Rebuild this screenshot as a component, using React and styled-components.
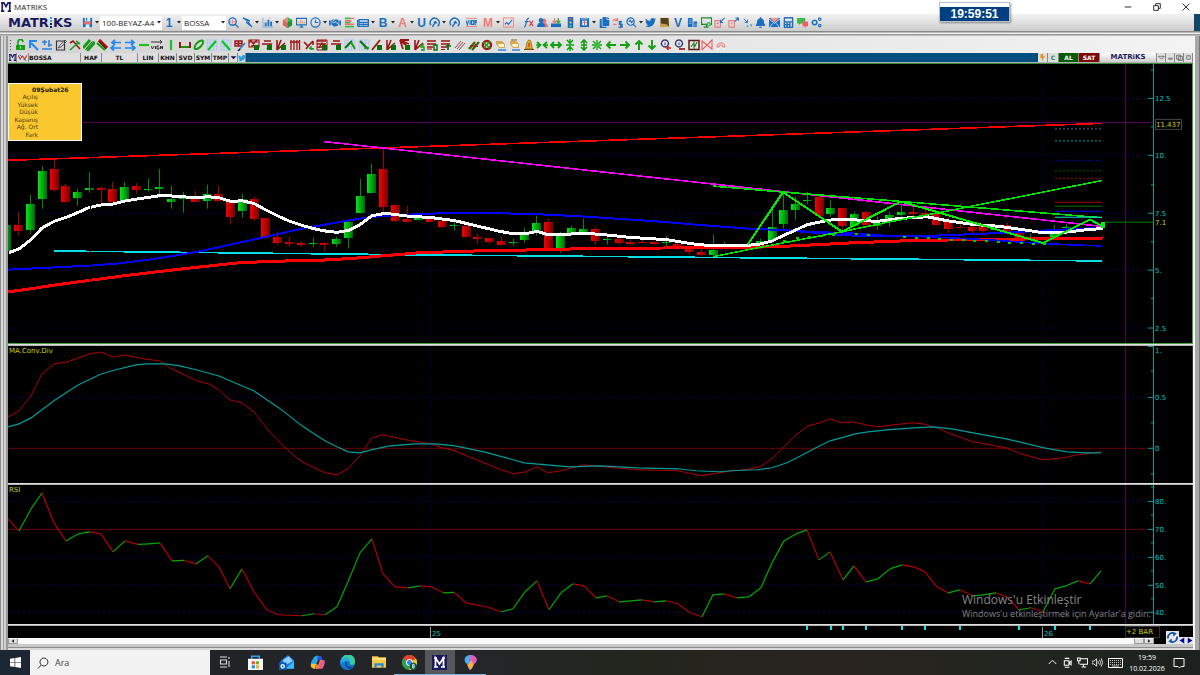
import React from "react"

import styled, { createGlobalStyle, css } from "styled-components"
import {
	FaHandshake, FaNewspaper, FaUserFriends, FaTwitter, FaBell, FaCalculator, FaCopy, FaBolt
} from "react-icons/fa"

const blue = "#1b6fc0"
const green = "#10a010"
const lime = "#00c818"
const maroon = "#9c1414"
const pink = "#f07a7a"
const navy = "#1a1a5e"
const verdana = `"DejaVu Sans", Verdana, sans-serif`
const segoe = `"Open Sans", "Segoe UI", sans-serif`

const GlobalStyle = createGlobalStyle`
	* {
		box-sizing: border-box;
	}
	body {
		margin: 0;
		background: #a8a8a8;
		font-family: ${segoe};
	}
	button, select, input {
		margin: 0;
		padding: 0;
		border: 0;
		border-radius: 0;
		background: none;
		font-family: inherit;
		color: inherit;
	}
	svg {
		display: block;
		flex: none;
	}
`

const StyledApp = styled.div`
	display: flex;
	flex-direction: column;
	height: 100vh;
	min-height: 500px;
	overflow: hidden;
`

/* ---------- title bar ---------- */

const TitleBar = styled.header`
	flex: none;
	display: flex;
	align-items: center;
	height: 14px;
	padding-left: 1px;
	background: white;
	font-size: 8px;
	line-height: 12px;
	color: #222;
	.title {
		flex: 1;
		margin-left: 3px;
	}
`

const WindowButton = styled.button`
	display: flex;
	justify-content: center;
	width: 29px;
	height: 12px;
	align-items: center;
	color: #222;
`

const Clock = styled.div`
	position: absolute;
	top: 2px;
	right: 190px;
	width: 71px;
	height: 20px;
	padding-top: 5px;
	border: 1px solid #b8c0c8;
	background: linear-gradient(white 0 4px, #003f80 4px);
	box-shadow: 1px 1px 2px rgba(0, 0, 0, .4);
	color: white;
	font: bold 12px/13px "Liberation Sans", Arial, sans-serif;
	text-align: center;
`

/* ---------- toolbars ---------- */

const MainToolbar = styled.div`
	flex: none;
	display: flex;
	align-items: center;
	height: 17px;
	padding-left: 8px;
	background: linear-gradient(#f2f2f2, #cccccc);
	.corner {
		width: 6px;
		height: 17px;
		margin-left: auto;
		background: #124468;
	}
`

const Logo = styled.div`
	display: flex;
	align-items: center;
	width: 72px;
	font: bold 13px/16px ${verdana};
	color: ${navy};
`

const ToolButton = styled.button`
	display: flex;
	align-items: center;
	justify-content: center;
	flex: none;
	width: ${props => props.$width || 14}px;
	height: 16px;
	color: ${props => props.$color || blue};
	font: bold 12px/16px "Liberation Sans", Arial, sans-serif;
	overflow: hidden;
`

const StyledCaret = styled.span`
	flex: none;
	width: 6px;
	display: flex;
	justify-content: center;
`

const ComboWrapper = styled.label`
	display: flex;
	align-items: center;
	flex: none;
	width: ${props => props.$width}px;
	height: 14px;
	background: white;
	select {
		flex: 1;
		min-width: 0;
		padding-left: 2px;
		appearance: none;
		font-size: 8px;
		line-height: 14px;
		color: #222;
	}
`

const Groove = styled.div`
	flex: none;
	height: 5px;
	background: linear-gradient(#888 0 1px, #bbb 1px 2px, #f0f0f0 2px 3px, #999 3px 4px, #bcbcbc 4px);
`

const Frame = styled.main`
	flex: 1;
	min-height: 0;
	display: flex;
	flex-direction: column;
	padding: 0 7px 0 8px;
	background: linear-gradient(90deg,
		#8c8c8c 0 1px, #d8d8d8 1px 3px, #a4a4a4 3px 4px, #cfcfcf 4px 6px, #9a9a9a 6px 8px,
		#b0b0b0 8px calc(100% - 7px), #f4f4f4 calc(100% - 7px) calc(100% - 5px),
		#a8a8a8 calc(100% - 5px) calc(100% - 1px), #777 calc(100% - 1px));
`

const DrawToolbar = styled.div`
	flex: none;
	display: flex;
	align-items: center;
	height: 17px;
	background: linear-gradient(90deg, #d4d4d4, #f3f3f3);
`

const DrawTools = styled.div`
	display: grid;
	grid-template-columns: repeat(52, 1fr);
	width: 715px;
	margin-left: 1px;
`

const DrawButton = styled.button`
	display: flex;
	justify-content: center;
	align-items: center;
	height: 16px;
`

const ChartHeader = styled.div`
	flex: none;
	display: flex;
	height: 9px;
	background: #00507f;
	.spacer {
		flex: 1;
	}
`

const HeaderButton = styled.button`
	display: flex;
	align-items: center;
	justify-content: ${props => (props.$left ? "flex-start" : "center")};
	width: ${props => props.$width}px;
	height: 9px;
	border-right: 1px solid #888;
	background: ${props => props.$bg || "#dedede"};
	color: ${props => props.$color || "#111"};
	font: bold 6px/9px ${verdana};
	white-space: nowrap;
	overflow: hidden;
`

const BrandButton = styled(HeaderButton)`
	font-size: 7px;
	color: ${navy};
	background: linear-gradient(white, #ccc);
`

/* ---------- chart panels ---------- */

const Charts = styled.section`
	position: relative;
	flex: 1;
	min-height: 0;
	display: flex;
	flex-direction: column;
	margin-top: 1px;
	border-top: 1px solid #3c8a3c;
	background: black;
`

const panelText = css`
	font: 7px ${verdana};
	fill: #00c4c4;
	text {
		white-space: pre;
	}
`

const Panel = styled.div`
	position: relative;
	flex: ${props => props.$size} 1 0;
	min-height: 0;
	display: flex;
	border-right: 1px solid ${props => (props.$active ? "#3ca03c" : "#333")};
	border-bottom: ${props => (props.$active ? "1px solid #3ca03c" : 0)};
	.plot {
		flex: 1;
		min-width: 0;
		height: 100%;
	}
	.scale {
		width: 45px;
		height: 100%;
		${panelText};
	}
`

const Divider = styled.div`
	flex: none;
	height: 2px;
	background: linear-gradient(#f4f4f4, #a0a0a0);
`

const PanelName = styled.div`
	position: absolute;
	top: 0;
	left: 1px;
	font: 7px/10px ${verdana};
	color: #d0d000;
`

const QuoteBox = styled.div`
	position: absolute;
	top: 19px;
	left: 0;
	width: 74px;
	height: 58px;
	padding: 2px;
	border: 1px solid white;
	background: #fbc72f;
	color: #4c3d10;
	display: grid;
	grid-template-rows: repeat(7, 1fr);
	font: 6px/7px ${verdana};
	strong {
		padding-left: 21px;
		color: #221a00;
	}
	span {
		width: 27px;
		text-align: right;
		justify-self: start;
	}
`

const Watermark = styled.div`
	position: absolute;
	right: 44px;
	bottom: 24px;
	width: 187px;
	color: #858585;
	font-size: 9px;
	line-height: 12px;
	white-space: nowrap;
	strong {
		display: block;
		font-weight: normal;
		font-size: 12px;
		line-height: 16px;
	}
`

const TimeAxis = styled.div`
	flex: none;
	display: flex;
	height: 12px;
	svg {
		flex: 1;
		min-width: 0;
		height: 12px;
		${panelText};
	}
`

const BarCount = styled.div`
	flex: none;
	width: 35px;
	margin-right: 33px;
	border: 1px solid #333;
	color: #d0d000;
	font: 7px/10px ${verdana};
	white-space: nowrap;
`

const ScrollRow = styled.div`
	flex: none;
	display: flex;
	height: 6px;
	.track {
		flex: 1;
		background: #fafafa;
	}
	.rest {
		width: 39px;
	}
`

const ScrollButton = styled.button`
	display: flex;
	align-items: center;
	justify-content: center;
	width: 10px;
	height: 6px;
	border: 1px solid #999;
	border-top-color: white;
	background: #ddd;
`

const NavButtons = styled.div`
	position: absolute;
	right: 0;
	bottom: 0;
	display: flex;
	align-items: flex-end;
	button {
		background: #e8e8e8;
	}
`

const FrameBottom = styled.div`
	flex: none;
	height: 6px;
	background: linear-gradient(#c8c8c8 0 3px, #8c8c8c 3px 4px, #d8d8d8 4px 6px);
`

/* ---------- taskbar ---------- */

const Taskbar = styled.footer`
	flex: none;
	display: flex;
	align-items: stretch;
	height: 25px;
	background: linear-gradient(90deg, #1c2734, #222326 18%, #25262a 38%, #23261e 52%, #2a2420 70%, #20261f 88%, #1c201e);
	color: white;
`

const StartButton = styled.button`
	display: flex;
	align-items: center;
	justify-content: center;
	width: 30px;
`

const SearchBox = styled.label`
	display: flex;
	align-items: center;
	width: 180px;
	padding-left: 7px;
	background: #f2f2f2;
	color: #333;
	input {
		flex: 1;
		min-width: 0;
		margin-left: 6px;
		font-size: 9px;
		outline: 0;
		&::placeholder {
			color: #444;
			opacity: 1;
		}
	}
`

const Apps = styled.div`
	display: grid;
	grid-template-columns: repeat(9, 1fr);
	width: 276px;
`

const AppButton = styled.button`
	display: flex;
	align-items: center;
	justify-content: center;
	background: ${props => (props.$active ? "#56575a" : "none")};
	border-bottom: 1px solid ${props => (props.$open ? "#76b9ed" : "transparent")};
`

const Tray = styled.div`
	display: flex;
	align-items: center;
	margin-left: auto;
	padding-right: 11px;
	time {
		width: 44px;
		font-size: 7px;
		line-height: 11px;
		text-align: center;
	}
`

const TrayButton = styled.button`
	display: flex;
	justify-content: center;
	width: ${props => props.$width || 15}px;
`

/* ---------- icons ---------- */

// every shape is [path, colour, stroke width], a width of 0 fills it
const Glyph = ({ shapes, size = 12 }) => (
	<svg width={size} height={size} viewBox="0 0 12 12">
		{shapes.map(([d, color, width = 1.2], i) =>
			<path key={i} d={d} fill={width ? "none" : color} stroke={width ? color : "none"} strokeWidth={width} />
		)}
	</svg>
)

const Caret = () => (
	<StyledCaret>
		<svg width="4" height="3" viewBox="0 0 4 3"><path d="M0 0h4l-2 2.5z" fill="#222" /></svg>
	</StyledCaret>
)

const LogoDots = () => (
	<svg width="4" height="11" viewBox="0 0 4 11">
		<path d="M1 0h2v2h-2zM1 3h2v2h-2z" fill="#28a0e0" />
		<path d="M1 6h2v2h-2zM1 9h2v2h-2z" fill={navy} />
	</svg>
)

const LetterM = ({ size = 11, color = navy }) => (
	<svg width={size} height={size} viewBox="0 0 12 12">
		<path d="M1.500 11V1h2L6 5.500 8.500 1h2v10M0 11h4M8 11h4M0 1h3M9 1h3" fill="none" stroke={color} strokeWidth="2" />
	</svg>
)

const swirl = [["M2 9A5 5 0 1 1 9.500 10", blue, 1.7], ["M4 11C4 8 7 8 7 5L5 6M7 5l1.500 2", blue, 1.5]]

const mainTools = [
	{ name: "Kaydet", shapes: [["M1 1h10v10H1z", blue, 0], ["M3 0h6v5H3z", "#e8eef6", 0], ["M5 1v3", blue, 1.4], ["M2 5h8v3H2z", "#f06868", 0], ["M4 8h4v4H4z", "#e8eef6", 0]], caret: true },
	{ combo: "100-BEYAZ-A4", label: "Sayfa", width: 62 },
	{ name: "Pencere", text: "1", caret: true },
	{ combo: "BOSSA", label: "Sembol", width: 44 },
	{ name: "Ara", shapes: [["M5 1a4 4 0 1 1 0 8a4 4 0 1 1 0-8M8 8l3.500 3.500", blue, 1.4], ["M3 6V4M5 7V3M7 6V4", pink, 1.1]] },
	{ name: "Hızlı", shapes: [["M1 1l5 3-1 2 6 5-4-5 1-2z", blue, 1.3]], caret: true },
	{ name: "Grafik", shapes: [["M1 1v10h11", "#79aede", 1], ["M3 10V6h2v4zM6 10V3h2v7zM9 10V5h2v5z", blue, 0], ["M3 4h1M8 1h1", pink, 1]], caret: true },
	{ name: "Pasta", shapes: [["M6 6V0L1 3z", "#ef8a7a", 0], ["M6 6L1 3v6l5 3z", "#ef5a5a", 0], ["M6 6V0l5 3v6l-5 3z", "#38b858", 0], ["M6 6l5-3v6l-5 3z", "#209030", 0]] },
	{ name: "Ekran", shapes: [["M.5 1.500h11v7h-11zM4 11h4M6 8v3", blue, 1.3], ["M3 7V5M5 7V3M7 7V4M9 7V5", "#e89050", 1]] },
	{ name: "Saat", shapes: [["M6 1a5 5 0 1 1 0 10a5 5 0 1 1 0-10M6 3v3h3", blue, 1.3]], caret: true },
	{ name: "Anlaşma", icon: <FaHandshake size={12} /> },
	{ name: "Derinlik", shapes: [["M1 1.500h6M1 6h6M1 10.500h10", "#40b850", 2], ["M6 1.500h5M1 4h7M1 8h10", "#ee7070", 1.6]] },
	{ name: "Haber", icon: <FaNewspaper size={12} />, caret: true },
	{ name: "B", text: "B", caret: true },
	{ name: "A", text: "A", color: pink, caret: true, width: 13 },
	{ name: "U", text: "U", width: 13 },
	{ name: "Yenile", shapes: swirl, caret: true, width: 13 },
	{ name: "Döngü", shapes: swirl },
	{ name: "VIOP", shapes: [["M0 1.500h12M0 10.500h12", pink, 1], ["M0 3.500l1.500 5 1.500-5M4.500 3.500v5M6 4h2.500v4H6zM10 9V4h2v2h-2", blue, 1.2]], width: 20 },
	{ name: "Matriks", text: "M", color: pink, caret: true },
	{ name: "Teknik", shapes: [["M.5 1h11v10H.5z", pink, .9], ["M2 8l2-2 2 2 4-5", blue, 1.2]] },
	{ gap: true },
	{ name: "Fonksiyon", shapes: [["M1 11c2 0 2-2 2.500-5S5 1 6.500 1.500M2 5h4", blue, 1.3], ["M7 4l4 6M11 4L7 10", "#e04040", 1.3]] },
	{ name: "Kişiler", icon: <FaUserFriends size={12} color={blue} />, shapes: [["M8 2a2.300 2.300 0 1 1-.1 0M6 11c0-6 6-6 6 0z", "#ee7070", 0], ["M4.500 1a2.600 2.600 0 1 1-.1 0M0 11c0-7 9-7 9 0z", blue, 0]] },
	{ name: "İndir", shapes: [["M0 7v4h11V7z", blue, 0], ["M4 1v5M2 4l2 3 2-3", pink, 1.4], ["M8 1v5M6 4l2 3 2-3", "#30a850", 1.4]] },
	{ name: "Sinyal", shapes: [["M3 0h6v12H3z", blue, 0], ["M5 1h2v2H5z", "#ff5050", 0], ["M5 5h2v2H5z", "#ffd040", 0], ["M5 9h2v2H5z", "#50e060", 0]] },
	{ name: "Yükle", shapes: [["M1 1h10v10H1z", blue, 0], ["M2 2h8", "#9cc8f0", 1], ["M3.500 4h5v5h-5z", "white", 0], ["M6 9V5M4 6.500l2-2 2 2", "#e04040", 1]], caret: true },
	{ name: "Kopyala", icon: <FaCopy size={11} /> },
	{ name: "Kur", shapes: [["M1 5a3 3 0 0 1 5-2M6 1v3H3M1 8h4", pink, 1.3], ["M11 5H8v3h3v3H7M9.500 4v8", blue, 1.3]], width: 13 },
	{ name: "İncele", shapes: [["M5 1a4 4 0 1 1 0 8a4 4 0 1 1 0-8M8 8l3 3M3 5l1.500-1.500L6 6l2-2", blue, 1.3]], caret: true },
	{ name: "Twitter", icon: <FaTwitter size={11} />, width: 13 },
	{ name: "Defter", shapes: [["M1 1h10v10H1z", "#c8a050", 0], ["M2 1h8l1 9-3-2-6-1z", "#54401c", 0]] },
	{ name: "V", text: "V" },
	{ name: "Şirket", shapes: [["M1 1h5v10H1zM7 5h4v6H7z", blue, 0], ["M2 3h3M2 5h3M2 7h3M8 7v3M10 7v4", "#a8cdf0", .7]] },
	{ name: "Ekran ayarı", shapes: [["M.5 1h11v7H.5zM3 11h5M6 8v3", "#208838", 1.3], ["M8.500 5.500a2.500 2.500 0 1 1-.1 0", "#3cb850", 0], ["M8.500 7v2", "white", 1]] },
	{ name: "Küçült", shapes: [["M1 4h6v7H1z", pink, 1.2], ["M3 6h2v2H3z", pink, 0], ["M11.500 1L7.500 5M7 3v3h3", blue, 1.1]], width: 13 },
	{ name: "Büyüt", shapes: [["M1 4h6v7H1z", pink, 1.2], ["M3 6h2v2H3z", "#d8a0a0", 0], ["M7.500 5l4-4M8 1h3.500v3", blue, 1.1]] },
	{ name: "Diz", shapes: [["M2 2l4 4M6 3v3H3", blue, 1], ["M9 8h2v2H9zM5 9h2v2H5z", "#58a0e0", 0]] },
	{ name: "Alarm", icon: <FaBell size={11} />, width: 13 },
	{ name: "Posta", shapes: [["M0 1h12v10H0z", blue, 0], ["M1 1h10L6 6z", "#f49090", 0], ["M0 2l6 5 6-5M1 11l3-4M11 11L8 7", "#e4ecf6", .9]] },
	{ name: "Hesap", icon: <FaCalculator size={11} /> },
	{ name: "Sohbet", shapes: [["M0 1h9v6H4L2 9V7H0z", "#40b850", 0], ["M6 5h6v5h-2l-1 2-1-2H6z", "#f06060", 0]] },
	{ name: "Ayarlar", shapes: [["M4 3.500a2.500 2.500 0 1 1-.1 0", blue, 1.800], ["M9.500 1a1.300 1.300 0 1 1-.1 0M9.500 8a1.300 1.300 0 1 1-.1 0", blue, 1.300]] }
]

const redGrid = ["M1 2h9M1 5h9M1 8h6", maroon, 1.4]
const redFan = ["M2 11V1M2 11L6 1M2 11l8-7", maroon, 1.6]
const greenS = ["M11 6H8v2h3v3H8", green, 1.4]
const greenBars = ["M6 6h5v5H6z", "#087008", 0]
const dots = ["M1 1h10v10H1zM1 4h10M1 7.500h10M4 1v10M7.500 1v10", "#a9c6ee", .9]
const hand = [["M1 2h6l3 3v4H4L1 5z", "#d8a850", 0], ["M3 5h6v3H4z", "#fff4c8", 0], ["M3 11h8", "#3c88e8", 1.6]]
const lens = [["M5 1a3.500 3.500 0 1 1-.1 0", "#303060", 1.3], ["M5 3.500v2.500", "#3060d0", 1.2]]

const drawTools = [
	[["M2 6h9v5H2z", green, 0], ["M4 6V3a2 2 0 0 1 5 0", green, 1.6], ["M6.500 7.500v2", "white", 1]],
	[["M10 11L3 4M2 9V2h7", "#2088f0", 2]],
	[["M1 3h5M3.500 1v5M7 6h4M1 10h10M8 1v7", "#2c80e0", 1.5]],
	[["M1.500 2h8v9h-8z", "#333", 1.2], ["M3.500 9l1-2.500L10 1l1.500 1.500L6 8z", "#555", 1]],
	[["M1 4l3-2 7 8", maroon, 1.6], ["M1 11l8-7M7 2l4 3", green, 1.6]],
	[["M0 9l7-8M4 12l8-9", green, 3], ["M2.500 10.500l7-8", "#044804", 1]],
	[["M3 1l8 8", maroon, 3.2], ["M1 4l8 7", green, 2.2], ["M3 3l7 7", "#501010", .9]],
	[["M11 3.500H3M11 9H1M5 1L2 3.500 5 6M4 6.500L1 9l3 2.500", "#2088f0", 1.7]],
	[["M1 3.500h8M1 9h10M7 1l3 2.500L7 6M8 6.500L11 9l-3 2.500", "#2088f0", 1.7]],
	[["M1 6h10", "#20c020", 2.2]],
	[["M0 3h11M9 1l2 2-2 1.500M0 7l1.500 3L3 7M4.500 7v3M8 7H6v3h2V8.500M9.500 10V7l2 3V7", "#333", 1]],
	[["M6 1v10", "#20c020", 2.2]],
	[["M1 3v5h10V3", maroon, 2], ["M2 8h8", green, 1.8]],
	[["M2 10C0 7 6 1 9 1.500S9 8 4 10z", green, 2]],
	[dots, ["M2 11l8-9", lime, 2]],
	[dots, ["M2 2l8 9", lime, 2]],
	[["M1 2h7v5H1zM1 4.500h7M4.500 2v5", maroon, 1.4], ["M5 11l6-7", "#3090d0", 1.8], ["M4 12l2-2", "#222", 1.6]],
	[["M1 1h10v7H1zM1 3h9M2 1l6 7M9 1L3 8", maroon, 1.2], greenBars],
	[["M3 2h7M1 5h9l-4 5", maroon, 1.7], greenBars],
	[redFan, greenBars],
	[["M2 1v10M5 1v10M8 1v10M10.500 1v10M1 3h10", maroon, 1.3]],
	[["M1 3l4 4 5-5M3 10l3-4M10 2v4", maroon, 1.6], ["M8 7v4M6 9l5 1", green, 1.4]],
	[redGrid, ["M1 1h10v10H1z", maroon, 1], ["M3 9l3-5 4 4", maroon, 1.3], greenBars],
	[["M3 2h7M1 5h9l-3 4", maroon, 1.7], greenBars],
	[dots, ["M1 9l7-7", "#087008", 2], ["M7 3l4 7", green, 1.8]],
	[dots, ["M2 2l8 8", "#087008", 2], ["M6 9h5", green, 1.600]],
	[["M1 11L9 1", maroon, 1.8], greenBars],
	[redFan, greenBars],
	[["M1 1h9M1 1l3 9M1 1l9 8M1 1l9 4", maroon, 1.8], greenBars],
	[redFan, greenS],
	[redGrid, ["M8 6h3v5H8z", "#087008", 1.4], ["M1 10h5", maroon, 1]],
	[redGrid, ["M8 5v6M6 7h5", "#087008", 1.700], ["M1 10.500h4", maroon, 1]],
	[["M1 9l6-7M3 10l6-7M5 11l6-7", "#8c4040", .9]],
	[["M1 10l6-7M4 11l7-8", "#406810", 2.4], ["M2 7h7M6 4l4 4", maroon, 1]],
	[["M6 2a4 4 0 1 1-.1 0", maroon, 2.4], ["M2 3l8 7M9 2L3 9", green, 1.3]],
	hand,
	[...hand, ["M2 1h6", "#806020", 1]],
	[["M2 10c2-2 1-8 4-9s2 7 4 9z", "#e0a828", 0], ["M2 10c2-2 1-8 4-9s2 7 4 9z", "#907020", .8], ["M1 10.500h10", "#704c10", 1], ["M6 4v4", "#c83010", 1.200]],
	[["M0 6h4M12 6H8M1 3l3.500 3L1 9M11 3L7.500 6 11 9", green, 1.7]],
	[["M1 6h10M4 3L1 6l3 3M8 3l3 3-3 3", green, 1.8]],
	[["M6 0v4M6 12V8M3 1l3 3.500L9 1M3 11l3-3.500L9 11M2 6h8", green, 1.4]],
	[["M6 1v10M3 4l3-3 3 3M3 8l3 3 3-3M3 6h6", green, 1.7]],
	[["M2 2l8 8M10 2l-8 8M6 1v10M1 6h10", green, 1.3], ["M3.500 3.500h5v5h-5z", "#40c040", 0]],
	[["M11 6H2M5.500 2.500L2 6l3.500 3.500", green, 1.9]],
	[["M1 6h9M6.500 2.500L10 6 6.500 9.500", green, 1.9]],
	[["M6 11V2M2.500 5.500L6 2l3.500 3.500", green, 1.9]],
	[["M6 1v9M2.500 6.500L6 10l3.500-3.500", green, 1.9]],
	[...lens, ["M8 7v4M6 9h5", "#e02020", 1.7]],
	[...lens, ["M5 10h6", "#a01818", 1.7]],
	[["M1 1.500h10v9H1z", "#601818", 1.5], ["M3 8l2-3 2 2 2-4M6 2v8", "#208020", 1.1]],
	[["M1 11V2l10 8V1L1 11", "#e86060", 1.1]],
	[["M2 8a4 4 0 1 1 8 0M4 8a2 2 0 1 1 4 0M2 8h2M8 8h2", "#ea8080", 1.1], ["M2 10h2M8 10h2", "white", 1.4]]
]

/* ---------- chart data ---------- */

const START = 430.7
const STEP = 11.77

// bar index from the start of the year, high, low, body top, body bottom, direction
const candles = [
	[-36, 225, 252, 225, 251, 1], [-35, 212, 236, 225, 231, 0], [-34, 195, 234, 204, 230, 1], [-33, 166, 209, 171, 199, 1],
	[-32, 160, 192, 169, 190, 0], [-31, 184, 203, 186, 202, 0], [-30, 189, 206, 192, 198, 1], [-29, 172, 193, 188, 190, 1],
	[-28, 187, 204, 188, 190, 0], [-27, 182, 203, 189, 202, 0], [-26, 182, 202, 187, 201, 1], [-25, 183, 194, 186, 190, 0],
	[-24, 179, 192, 189, 190, 1], [-23, 169, 198, 187, 189, 1], [-22, 186, 209, 199, 202, 1], [-21, 192, 213, 198, 199, 1],
	[-20, 191, 202, 199, 202, 0], [-19, 185, 209, 194, 201, 1], [-18, 186, 202, 194, 201, 0], [-17, 201, 225, 202, 217, 0],
	[-16, 194, 218, 199, 211, 1], [-15, 197, 221, 199, 219, 0], [-14, 218, 239, 218, 238, 0], [-13, 232, 245, 237, 243, 0],
	[-12, 237, 247, 242, 244, 0], [-11, 242, 247, 243, 245, 0], [-10, 238, 247, 243, 244, 1], [-9, 242, 252, 243, 245, 0],
	[-8, 237, 247, 239, 244, 1], [-7, 221, 249, 222, 238, 1], [-6, 179, 214, 196, 213, 1], [-5, 164, 193, 174, 193, 1],
	[-4, 148, 213, 169, 207, 0], [-3, 205, 222, 205, 221, 0], [-2, 206, 222, 219, 222, 0], [-1, 216, 221, 218, 220, 1],
	[0, 218, 222, 219, 222, 0], [1, 221, 228, 221, 227, 0], [2, 222, 231, 225, 226, 1], [3, 225, 237, 226, 237, 0],
	[4, 234, 244, 237, 239, 0], [5, 238, 244, 238, 242, 0], [6, 237, 246, 241, 245, 0], [7, 239, 246, 242, 243, 1],
	[8, 228, 243, 235, 240, 1], [9, 216, 236, 223, 233, 1], [10, 219, 250, 222, 249, 0], [11, 232, 253, 236, 249, 1],
	[12, 226, 236, 228, 235, 1], [13, 219, 233, 229, 232, 1], [14, 227, 245, 229, 241, 0], [15, 237, 245, 239, 240, 1],
	[16, 238, 245, 239, 243, 0], [17, 240, 245, 242, 244, 0], [18, 239, 243, 242, 243, 0], [19, 241, 245, 242, 244, 0],
	[20, 236, 247, 242, 243, 1], [21, 242, 247, 244, 246, 0], [22, 245, 255, 247, 252, 0], [23, 249, 256, 252, 255, 0],
	[24, 235, 257, 250, 255, 1], [25, 242, 248, 245, 246, 1], [28, 239, 245, 241, 244, 1], [29, 206, 242, 227, 240, 1],
	[30, 192, 229, 210, 224, 1], [31, 197, 220, 204, 210, 1], [32, 192, 204, 200, 201, 1], [33, 196, 217, 197, 216, 0],
	[34, 200, 217, 208, 214, 1], [35, 208, 231, 208, 226, 0], [36, 212, 227, 214, 226, 1], [37, 211, 227, 212, 225, 0],
	[38, 217, 230, 223, 226, 1], [39, 212, 227, 215, 220, 1], [40, 202, 219, 212, 215, 1], [41, 207, 217, 212, 214, 0],
	[42, 208, 217, 213, 216, 0], [43, 212, 226, 213, 225, 0], [44, 217, 233, 221, 229, 0], [45, 224, 228, 227, 228, 0],
	[46, 225, 233, 227, 231, 0], [47, 226, 233, 226, 231, 0], [48, 227, 231, 229, 230, 1], [49, 223, 234, 225, 232, 0],
	[50, 232, 239, 233, 238, 0], [51, 234, 241, 238, 239, 1], [53, 225, 238, 233, 238, 1], [54, 224, 229, 227, 228, 1]
]

const priceLines = [
	["8,160.500 384,148 720,136.700 1102,123.500", "#ff0000", 1.6],
	["324,141.700 720,185 1102,226.700", "#ff00ff", 1.6],
	["54,251.300 400,255 700,257.700 1102,261.300", "#00e0e8", 1.6],
	["8,292.300 30,289.300 53,285.700 90,280.700 123,276.300 158,272 200,267.300 240,263 287,261.300 327,260.300 353,258.700 377,256.700 417,253.300 460,251.700 500,250.700 550,250 590,248.700 670,248.300 748,247.700 783,246.700 817,245 850,243.300 900,241.300 950,240.300 1000,239.700 1067,238.700 1103,238.300", "#ff0000", 3],
	["8,270 90,266 117,264 147,260.300 173,256.300 200,251.700 233,244.300 267,237 300,229.300 347,221 370,217.300 400,215.300 437,213.700 507,213.700 550,215 587,217 637,220.300 670,222.700 700,225.300 750,229 780,230.300 803,232 833,234.700 860,236.300 900,236.300 933,236 967,234.700 1000,233.300 1047,230.700 1102,228", "#0000ff", 2],
	["783,230 810,232 850,233.300 887,236 933,237.300 987,240 1033,243.300 1067,245 1102,246.300", "#0000ff", 1.6],
	["9,253 19,249.300 31,240 42,228.300 54,221.700 67,217.300 78,212.700 88,208.300 100,205.300 113,204.300 125,201.300 137,199.300 148,197.700 161,195.700 173,196.300 197,198 208,197 219,198 231,201.700 242,201 254,203.700 266,210.300 278,216.300 290,221.700 302,225.700 313,228.700 323,231 337,232.700 349,230.700 360,225 372,216 383,214 392,214.300 410,216.700 430,217.700 455,221 477,226.300 500,231.700 513,234 527,233.700 537,231.700 548,235 560,235.300 583,233.300 607,235.300 630,237.700 667,240 683,242.700 700,245.300 748,245.700 760,244.300 772,241.300 783,236 795,230.700 807,225 830,220.300 853,220 877,221.700 900,218.700 927,217 947,221 973,224.700 1000,226.700 1023,230 1043,233 1067,232.300 1087,230 1103,228.700", "#ffffff", 3],
	["713,186.300 783,192.300 901,201.700 1102,218", "#00e000", 1.6],
	["713,257 748,250 842,232 890,222 937,213.300 1102,180.700", "#00e000", 1.6],
	["748,244.700 783,192.300 842,232 901,201.700 1043,243.300 1090,219.700 1103,227", "#00f000", 2]
]

const levels = [
	[129, "#6060a0", "2 2"], [141, "#00a0a0", "2 2"], [160.500, "#0000a0", "5 3"], [171, "#006000", "2 2"], [178.500, "#a00000", "2 2"],
	[202.500, "#b00000"], [206.500, "#007000"], [211.500, "#0000ff"], [217.500, "#00e0e8"]
]

const supports = [
	[783, 241], [796, 238.500], [808, 237], [820, 236], [832, 235], [855, 234], [867, 235], [903, 237], [915, 238], [927, 238.500],
	[938, 239], [950, 240], [962, 240], [973, 241], [985, 241.500], [997, 242], [1008, 243], [1020, 243.500], [1032, 244], [1043, 244.500]
]

const macd = "8,417 19,411 31,396 42,374 54,364 67,362 89,354 101,352 113,357 124,355 145,359 160,361 170,368 197,381 209,384 219,390 230,400 242,403 254,412 268,430 279,442 291,453 302,462 325,473 337,475 348,469 360,456 372,438 383,435 406,440 431,444 442,448 455,451 469,457 484,463 501,470 514,474 526,472 537,467 548,473 561,471 572,468 584,465 593,466 613,468 638,470 678,471 701,476 732,471 745,470 760,467 772,459 782,449 795,436 808,426 820,423 830,419 842,423 853,422 866,425 879,427 893,425 912,423 923,424 937,428 948,433 973,442 990,445 1006,448 1021,454 1043,460 1063,458 1078,455 1101,452"
const macdSignal = "8,427 19,424 31,418 55,400 78,385 101,374 115,370 136,365 147,364 165,364 180,366 197,370 219,376 254,391 279,408 302,426 314,434 325,441 337,447 348,452 360,453 371,450 390,446 415,444 436,444 455,446 484,452 513,460 524,463 547,465 570,467 600,466 638,468 678,469 696,471 719,472 732,471 757,470 772,468 787,463 799,457 814,449 830,441 845,437 855,434 868,432 887,430 914,428 933,427 952,429 973,433 1006,439 1044,448 1067,452 1088,453 1101,453"

const rsi = [
	[8, 519], [19, 531], [31, 509], [42, 493], [54, 523], [66, 541], [78, 534], [90, 532], [101, 534], [113, 552], [125, 541],
	[138, 544.500], [149, 544], [160, 543], [172, 561], [184, 560.500], [196, 564], [208, 556], [219, 567], [230, 589], [242, 569],
	[254, 592], [267, 610], [278, 615], [302, 616], [314, 614], [325, 615], [337, 607], [348, 582], [360, 553], [372, 539],
	[383, 574], [395, 587], [408, 588], [420, 586], [431, 587], [443, 593], [454, 592.500], [466, 603], [486, 607], [501, 612],
	[513, 609], [525, 592], [537, 581], [549, 610], [561, 593], [573, 584], [584, 586], [596, 598], [607, 596], [619, 602],
	[642, 600], [654, 602], [666, 601], [678, 604], [690, 613], [702, 617], [713, 595], [724, 594], [737, 598], [749, 597],
	[761, 588], [772, 563], [784, 541], [796, 534], [807, 530], [819, 560], [830, 552], [843, 580], [854, 566], [866, 582],
	[878, 579], [890, 569], [902, 565], [914, 567], [925, 572], [937, 587], [948, 593], [960, 590], [973, 596], [983, 595],
	[996, 593], [1008, 598], [1019, 610], [1031, 608], [1043, 612], [1055, 589], [1066, 586], [1078, 581], [1090, 584], [1101, 571]
]

const marks = [807, 831, 843, 866, 902, 925, 960, 1019, 1055, 1090]

const Grid = ({ top, bottom, rows, zero }) => (
	<g strokeDasharray="2 3" stroke="#00005e" shapeRendering="crispEdges">
		{rows.map(y => <path key={y} d={`M8 ${y}H1147`} />)}
		<path d={`M430.500 ${top}V${bottom}M1042.500 ${top}V${bottom}`} />
		{zero && <path d={`M8 ${zero}H1147`} stroke="#6a0000" strokeDasharray="none" />}
		<path d={`M1125.500 ${top}V${bottom}`} stroke="#580058" strokeDasharray="none" />
	</g>
)

const Scale = ({ top, height, labels, minor, children }) => (
	<svg className="scale" viewBox={`1147 ${top} 45 ${height}`} preserveAspectRatio="none">
		<g stroke="#00a0a0" shapeRendering="crispEdges">
			<path d={`M1153.500 ${top}v${height}`} />
			{labels.map(([y]) => <path key={y} d={`M1148 ${y}h5`} />)}
			{minor.map(y => <path key={y} d={`M1151 ${y}h2`} />)}
		</g>
		{labels.map(([y, label]) => <text key={y} x="1155" y={Math.max(y + 2.5, top + 7)}>{label}</text>)}
		{children}
	</svg>
)

const PriceChart = () => (
	<Panel $size={279} $active>
		<svg className="plot" viewBox="8 64 1139 279" preserveAspectRatio="none" shapeRendering="crispEdges">
			<defs>
				<linearGradient id="up"><stop stopColor="#00e818" /><stop offset="1" stopColor="#006808" /></linearGradient>
				<linearGradient id="down"><stop stopColor="#f40000" /><stop offset="1" stopColor="#780000" /></linearGradient>
			</defs>
			<Grid top={64} bottom={343} rows={[98.5, 155.5, 213.5, 270.5, 328.5]} />
			<path d="M82 122.500H1147" stroke="#580058" />
			{candles.map(([i, high, low, top, bottom, up]) => {
				const x = Math.floor(START + STEP * i)
				return (
					<g key={i}>
						<path d={`M${x + .5} ${high}V${low}`} stroke={up ? "#008c00" : "#a80000"} />
						<rect x={x - 4} y={top} width="9" height={bottom - top} fill={up ? "url(#up)" : "url(#down)"} />
					</g>
				)
			})}
			{priceLines.map(([points, color, width], i) =>
				<polyline key={i} points={points} fill="none" stroke={color} strokeWidth={width} />
			)}
			<path d="M90.500 120v170" stroke="black" />
			{supports.map(([x, y]) => <rect key={x} x={x} y={y - 1} width="3" height="2" fill="#00d000" />)}
			{levels.map(([y, color, dash]) => <path key={y} d={`M1055 ${y}h47`} stroke={color} strokeDasharray={dash} />)}
			<rect x="1101" y="222" width="4" height="6" fill="#00f020" />
			<path d="M1105 222.500h42" stroke="#008000" />
		</svg>
		<Scale
			top={64} height={279} minor={[70, 127, 185, 242, 299]}
			labels={[[98.5, "12.5"], [155.5, "10."], [213.5, "7.5"], [270.5, "5."], [328.5, "2.5"]]}
		>
			<path d="M1147 122.500h6" stroke="#580058" />
			<path d="M1147 222.500h6" stroke="#008000" />
			<rect x="1155.5" y="119.5" width="26" height="10" fill="black" stroke="#444" />
			<text x="1156" y="127" fill="#d0d000">11.437</text>
			<text x="1155" y="225" fill="#d0d000">7.1</text>
		</Scale>
		<QuoteBox>
			<strong>09Şubat26</strong>
			{["Açılış", "Yüksek", "Düşük", "Kapanış", "Ağ. Ort", "Fark"].map(row => <span key={row}>{row}</span>)}
		</QuoteBox>
	</Panel>
)

const MacdChart = () => (
	<Panel $size={138}>
		<svg className="plot" viewBox="8 346 1139 138" preserveAspectRatio="none">
			<Grid top={346} bottom={484} rows={[397.5]} zero={448.5} />
			<polyline points={macd} fill="none" stroke="#b00000" />
			<polyline points={macdSignal} fill="none" stroke="#009c9c" strokeWidth="1.200" />
		</svg>
		<Scale top={346} height={138} labels={[[346.5, "1."], [397.5, "0.5"], [448.5, "0"]]} minor={[371, 423, 474]} />
		<PanelName>MA.Conv.Div</PanelName>
	</Panel>
)

const RsiChart = () => (
	<Panel $size={139}>
		<svg className="plot" viewBox="8 485 1139 139" preserveAspectRatio="none">
			<Grid top={485} bottom={624} rows={[501.5, 557.5, 585.5, 612.5]} zero={529.5} />
			{rsi.slice(1).map(([x, y], i) =>
				<path key={x} d={`M${rsi[i][0]} ${rsi[i][1]}L${x} ${y}`} stroke={y > rsi[i][1] ? "#b00000" : "#00a800"} strokeWidth="1.200" />
			)}
		</svg>
		<Scale
			top={485} height={139} minor={[487, 515, 543, 571, 599]}
			labels={[[501.5, "80."], [529.5, "70."], [557.5, "60."], [585.5, "50."], [612.5, "40."]]}
		/>
		<PanelName>RSI</PanelName>
	</Panel>
)

const MainTool = ({ tool }) => {
	if (tool.gap) return <StyledCaret />
	if (tool.combo) {
		return (
			<ComboWrapper $width={tool.width}>
				<select aria-label={tool.label}><option>{tool.combo}</option></select>
				<Caret />
			</ComboWrapper>
		)
	}
	return (
		<>
			<ToolButton aria-label={tool.name} $width={tool.width} $color={tool.color}>
				{tool.shapes ? <Glyph shapes={tool.shapes} size={11} /> : tool.icon || tool.text}
			</ToolButton>
			{tool.caret && <Caret />}
		</>
	)
}

const headerTabs = [["HAF", 21], ["TL", 36], ["LIN", 21], ["KHN", 18], ["SVD", 18], ["SYM", 17], ["TMP", 17]]

const apps = [
	{ name: "Görev Görünümü", icon: [["M1 1h7M1 11h7M1.500 4h6v4h-6zM10 1v2M10 5v6", "#ddd", 1.1]] },
	{ name: "Store", size: 15, icon: [["M3 3V1h6v2", "#30a8f0", 1.2], ["M0 3h12v9H0z", "#f6f6f6", 0], ["M3 5h2.500v2.500H3z", "#f05030", 0], ["M6.300 5h2.500v2.500H6.300z", "#70b020", 0], ["M3 8.200h2.500v2.500H3z", "#1098f0", 0], ["M6.300 8.200h2.500v2.500H6.300z", "#f8b010", 0]] },
	{ name: "Outlook", size: 15, icon: [["M1 5l6-5 5 4v7H3z", "#1878d8", 0], ["M3 4l5-3 3 4-6 3z", "#8cd0ff", 0], ["M5 11l7-6v6z", "#38b8f8", 0], ["M0 6h6v6H0z", "#0c58b0", 0], ["M3 7.700a1.300 1.300 0 1 1-.1 0", "white", 1]] },
	{ name: "Copilot", size: 15, icon: [["M3 2c1-2 5-2 6 0L8 8H1C0 6 2 4 3 2z", "#28a8e8", 0], ["M1 7h4l-1 4C1 11 0 9 1 7z", "#f0c030", 0], ["M6 4h5c2 1 0 5-1 7H5z", "#e85890", 0], ["M6 1h3l1 3H6z", "#2458d8", 0], ["M5 8l3-4h1L7 11H4z", "#f08040", 0], ["M5 7l1.500-3H8L6.500 8z", "#2a2a2e", 0]] },
	{ name: "Edge", size: 15, icon: [["M6 0a6 6 0 1 1-.1 0", "#1478d0", 0], ["M1 4a5.500 5.500 0 0 1 11 2c0 3-5 2-4 0C8 4 5 3 1 7z", "#38cca0", 0], ["M1 4C4 0 9 3 8 6 7 4 3 4 1 7z", "#28a8e0", 0], ["M5 6c-1 3 2 5 5 4", "#0c4c98", 1.6]] },
	{ name: "Dosya Gezgini", size: 14, icon: [["M0 1h5l1 1h6v9H0z", "#f8c840", 0], ["M0 3h12v1H0z", "#fff0a0", 0], ["M2 11V7h8v4H8V9H4v2z", "#2888e0", 0]] },
	{ name: "Chrome", size: 15, open: true, icon: [["M6 0a6 6 0 1 1-.1 0", "#30a050", 0], ["M6 6L.8 3A6 6 0 0 1 11.200 3z", "#e84030", 0], ["M6 6l5.200-3A6 6 0 0 1 6 12z", "#f8c820", 0], ["M6 3.200a2.800 2.800 0 1 1-.1 0", "white", 0], ["M6 4a2 2 0 1 1-.1 0", "#3880f0", 0], ["M9 6a3 3 0 1 1-.1 0", "#085848", 0], ["M8.500 7.500h1.200v3H8.500zM8.500 9h1.200", "white", .6]] },
	{ name: "Matriks", active: true, open: true },
	{ name: "Paint 3D", size: 15, open: true, icon: [["M6 0C1 0 0 5 3 7l2 5 2-1 2-4c4-3 1-7-3-7z", "#48b0f0", 0], ["M6 0c4 0 7 4 3 7l-1 1-3-4z", "#e858b8", 0], ["M3 7h6l-2 4H5z", "#f07838", 0], ["M4 8l3-4 1 4-2 4z", "#f8b848", 0]] }
]

function App() {
	return (
		<StyledApp>
			<GlobalStyle />
			<TitleBar>
				<LetterM size={10} />
				<span className="title">MATRIKS</span>
				<WindowButton aria-label="Simge durumuna küçült"><Glyph size={8} shapes={[["M1 6h10", "#222", 1.4]]} /></WindowButton>
				<WindowButton aria-label="Önceki boyut"><Glyph size={8} shapes={[["M1 4h7v7H1zM4 4V1h7v7H8", "#222", 1.4]]} /></WindowButton>
				<WindowButton aria-label="Kapat"><Glyph size={8} shapes={[["M1 1l10 10M11 1L1 11", "#222", 1.4]]} /></WindowButton>
			</TitleBar>
			<Clock>19:59:51</Clock>
			<MainToolbar>
				<Logo>MATR<LogoDots />KS</Logo>
				{mainTools.map((tool, i) => <MainTool key={i} tool={tool} />)}
				<div className="corner" />
			</MainToolbar>
			<Groove />
			<Frame>
				<DrawToolbar>
					<svg width="4" height="12" viewBox="0 0 4 12"><path d="M2.500 1v10" stroke="#456" strokeDasharray="1 2" /></svg>
					<DrawTools>
						{drawTools.map((shapes, i) =>
							<DrawButton key={i} aria-label={`Çizim aracı ${i + 1}`}><Glyph shapes={shapes} size={12} /></DrawButton>
						)}
					</DrawTools>
				</DrawToolbar>
				<ChartHeader>
					<HeaderButton $width={9} aria-label="Menü"><LetterM size={7} /></HeaderButton>
					<HeaderButton $width={12} aria-label="Görünüm">
						<Glyph size={9} shapes={[["M0 3l3 5 3-4 3 4 3-5", "#c03838", 1.6], ["M2 2l3 3M7 8l4 2", "#3858b0", 1.2]]} />
					</HeaderButton>
					<HeaderButton $width={52} $left>BOSSA</HeaderButton>
					{headerTabs.map(([name, width]) => <HeaderButton key={name} $width={width}>{name}</HeaderButton>)}
					<HeaderButton $width={9} aria-label="Diğer"><Glyph size={7} shapes={[["M1 4h10L6 9z", "#114", 0]]} /></HeaderButton>
					<HeaderButton $width={8} $color="#28a0e8" aria-label="Paylaş"><FaTwitter size={8} /></HeaderButton>
					<div className="spacer" />
					<HeaderButton $width={10} $color="#e89010" aria-label="Emir"><FaBolt size={7} /></HeaderButton>
					<HeaderButton $width={11} $color="#108060">C</HeaderButton>
					<HeaderButton $width={20} $bg="#085c08" $color="white">AL</HeaderButton>
					<HeaderButton $width={21} $bg="#7c0808" $color="white">SAT</HeaderButton>
					<BrandButton $width={57}>MATRiKS</BrandButton>
					{["M1 4h10L6 9z", "M3 7h6v2H3z", "M1 2h7v7H1zM4 4h7v7H4z", "M3 3h6v6H3z"].map(d =>
						<HeaderButton key={d} $width={9} aria-label="Pencere düğmesi"><Glyph size={7} shapes={[[d, "#555", 1.2]]} /></HeaderButton>
					)}
				</ChartHeader>
				<Charts>
					<PriceChart />
					<Divider />
					<MacdChart />
					<Divider />
					<RsiChart />
					<Divider />
					<TimeAxis>
						<svg viewBox="8 626 1117 12" preserveAspectRatio="none">
							{marks.map(x => <rect key={x} x={x - 1} y="626" width="2" height="4" fill="#00e8e8" />)}
							<path d="M430.500 627v11M1042.500 627v11" stroke="#999" />
							<text x="432" y="636">25</text>
							<text x="1044" y="636">26</text>
						</svg>
						<BarCount>+2 BAR</BarCount>
					</TimeAxis>
					<ScrollRow>
						<ScrollButton aria-label="Sola"><Glyph size={4} shapes={[["M9 1v10L2 6z", "#222", 0]]} /></ScrollButton>
						<div className="track" />
						<ScrollButton aria-label="Tutamaç" />
						<ScrollButton aria-label="Sağa"><Glyph size={4} shapes={[["M3 1v10l7-5z", "#222", 0]]} /></ScrollButton>
						<div className="rest" />
					</ScrollRow>
					<NavButtons>
						<button aria-label="Yenile">
							<Glyph size={13} shapes={[["M2 7a4 4 0 0 1 6-4.500M10 5a4 4 0 0 1-6 4.500", "#1858a8", 1.700], ["M6 1l4 1-3 3zM6 11l-4-1 3-3z", "#1858a8", 0]]} />
						</button>
						<button aria-label="Geri"><Glyph size={7} shapes={[["M9 1v10L1 6z", "#0000a0", 0]]} /></button>
						<button aria-label="İleri"><Glyph size={7} shapes={[["M3 1v10l8-5z", "#0000a0", 0]]} /></button>
					</NavButtons>
					<Watermark>
						<strong>Windows'u Etkinleştir</strong>
						Windows'u etkinleştirmek için Ayarlar'a gidin.
					</Watermark>
				</Charts>
				<FrameBottom />
			</Frame>
			<Taskbar>
				<StartButton aria-label="Başlat">
					<Glyph size={11} shapes={[["M0 2l5-1v4.700H0zM5.700 1L12 0v5.700H5.700zM0 6.300h5V11l-5-1zM5.700 6.300H12V12l-6.300-1z", "white", 0]]} />
				</StartButton>
				<SearchBox>
					<Glyph size={12} shapes={[["M7 1a4 4 0 1 1-.1 0M4.200 8L1 11.500", "#333", 1]]} />
					<input type="search" placeholder="Ara" aria-label="Ara" />
				</SearchBox>
				<Apps>
					{apps.map(({ name, icon, size, active, open }) =>
						<AppButton key={name} aria-label={name} $active={active} $open={open}>
							{icon
								? <Glyph shapes={icon} size={size} />
								: <svg width="15" height="15" viewBox="0 0 15 15">
									<path d="M0 0h15v15H0z" fill={navy} />
									<path d="M2 12h4M9 12h4M2 3h3M10 3h3M3.500 12V3l4 6 4-6v9" fill="none" stroke="white" strokeWidth="1.700" />
								</svg>
							}
						</AppButton>
					)}
				</Apps>
				<Tray>
					<TrayButton aria-label="Gizli simgeler"><Glyph size={9} shapes={[["M1 8l5-5 5 5", "white", 1.3]]} /></TrayButton>
					<TrayButton aria-label="Kamera"><Glyph size={11} shapes={[["M2.500 4h5v5h-5zM8 6l2-1.500v4L8 7M3 1.500h5M3 11.300h5", "white", 1.1]]} /></TrayButton>
					<TrayButton aria-label="Ağ"><Glyph size={11} shapes={[["M3 2h8.500v6H3M5 11h5M7 8v3M.5 1h3v3h-3zM2 4v4", "white", 1.1]]} /></TrayButton>
					<TrayButton aria-label="Ses"><Glyph size={11} shapes={[["M0 4.500h2L5 2v8L2 7.500H0zM6.500 4.500q1 1.500 0 3M8.300 3q2 3 0 6M10 1.500q3 4.500 0 9", "white", .9]]} /></TrayButton>
					<TrayButton $width={20} aria-label="Klavye">
						<svg width="15" height="10" viewBox="0 0 15 10" fill="none" stroke="white">
							<path d="M.5.5h14v9H.5z" />
							<path d="M2 2.500h11M2 4.500h11M2 6.500h11" strokeDasharray="1 1" opacity=".7" />
							<path d="M4 8h7" opacity=".7" />
						</svg>
					</TrayButton>
					<time dateTime="2026-02-10T19:59">19:59<br />10.02.2026</time>
					<TrayButton $width={20} aria-label="Bildirimler"><Glyph size={12} shapes={[["M1 1.500h10v8H8L6.500 11 5 9.500H1z", "white", 1]]} /></TrayButton>
				</Tray>
			</Taskbar>
		</StyledApp>
	)
}

export default App
